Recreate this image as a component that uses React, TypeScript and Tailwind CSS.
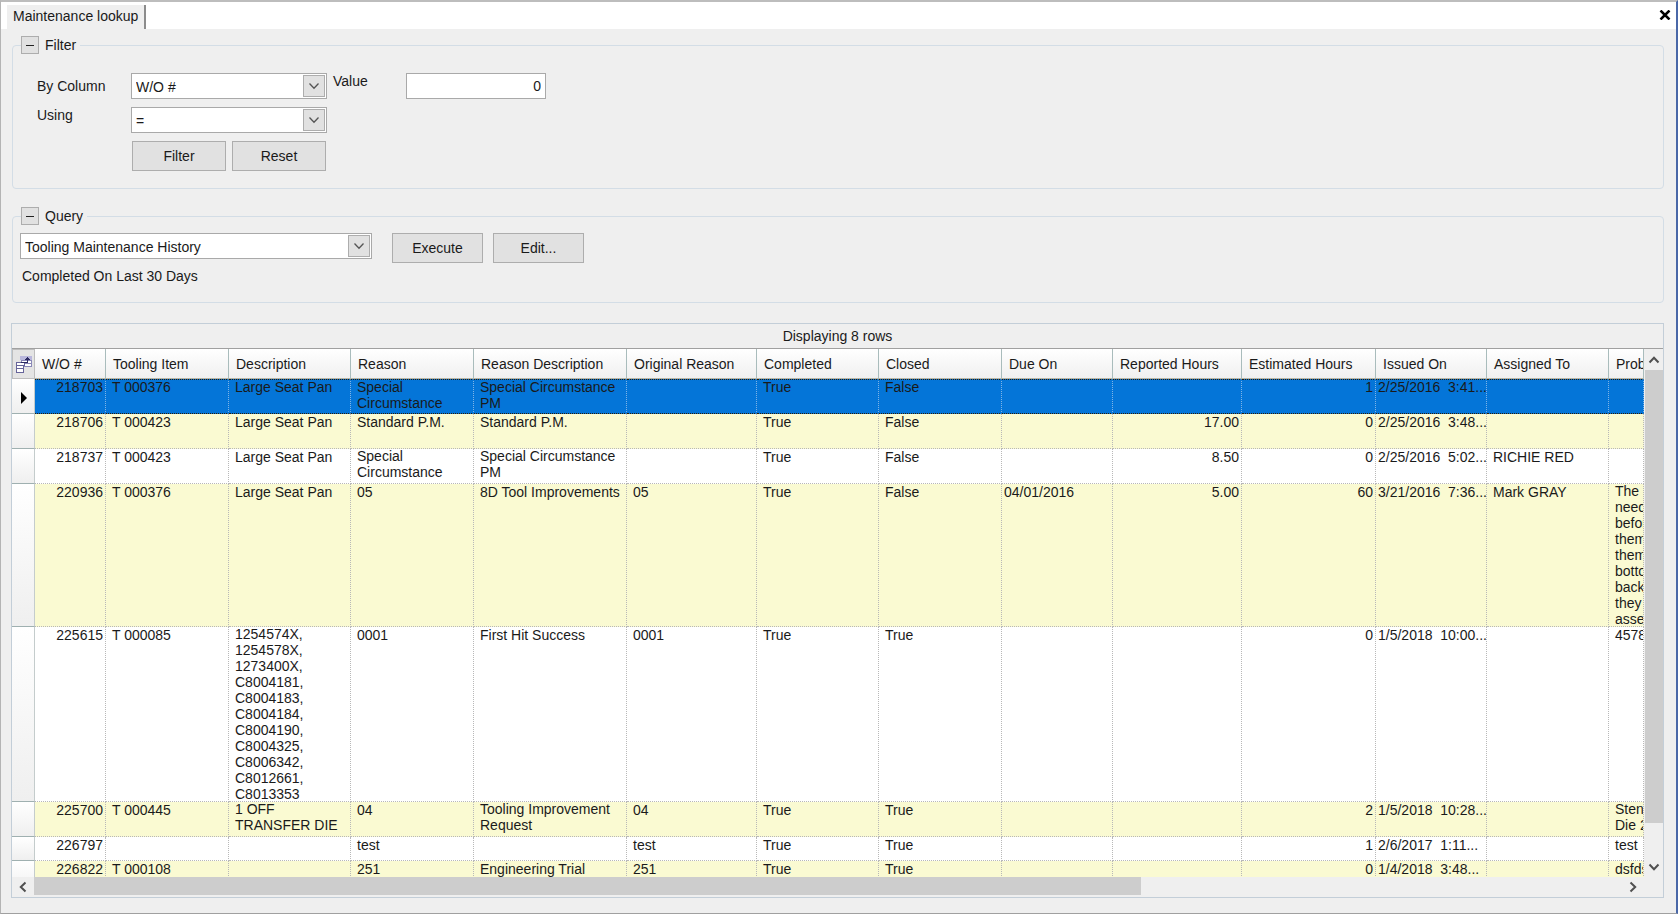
import { ReactNode } from "react";

type Cell = string | string[];

type Row = {
    height: string;
    cells: Cell[];
};

const columns = [
    { label: "W/O #", width: "w-[71px]", align: "pr-0.5 text-right" },
    { label: "Tooling Item", width: "w-[123px]", align: "pl-1.5" },
    { label: "Description", width: "w-[122px]", align: "pl-1.5" },
    { label: "Reason", width: "w-[123px]", align: "pl-1.5" },
    { label: "Reason Description", width: "w-[153px]", align: "pl-1.5" },
    { label: "Original Reason", width: "w-[130px]", align: "pl-1.5" },
    { label: "Completed", width: "w-[122px]", align: "pl-1.5" },
    { label: "Closed", width: "w-[123px]", align: "pl-1.5" },
    { label: "Due On", width: "w-[111px]", align: "pl-0.5" },
    { label: "Reported Hours", width: "w-[129px]", align: "pr-0.5 text-right" },
    { label: "Estimated Hours", width: "w-[134px]", align: "pr-0.5 text-right" },
    { label: "Issued On", width: "w-[111px]", align: "pl-0.5" },
    { label: "Assigned To", width: "w-[122px]", align: "pl-1.5" },
    { label: "Problem", width: "", align: "pl-1.5" },
];

const rows: Row[] = [
    {
        height: "h-[35px]",
        cells: ["218703", "T 000376", "Large Seat Pan", ["Special", "Circumstance"], ["Special Circumstance", "PM"], "", "True", "False", "", "", "1", "2/25/2016  3:41...", "", ""],
    },
    {
        height: "h-[35px]",
        cells: ["218706", "T 000423", "Large Seat Pan", "Standard P.M.", "Standard P.M.", "", "True", "False", "", "17.00", "0", "2/25/2016  3:48...", "", ""],
    },
    {
        height: "h-[35px]",
        cells: ["218737", "T 000423", "Large Seat Pan", ["Special", "Circumstance"], ["Special Circumstance", "PM"], "", "True", "False", "", "8.50", "0", "2/25/2016  5:02...", "RICHIE RED", ""],
    },
    {
        height: "h-[143px]",
        cells: ["220936", "T 000376", "Large Seat Pan", "05", "8D Tool Improvements", "05", "True", "False", "04/01/2016", "5.00", "60", "3/21/2016  7:36...", "Mark GRAY", ["The rails", "need", "before", "them", "them", "bottom", "back", "they", "assembly"]],
    },
    {
        height: "h-[175px]",
        cells: ["225615", "T 000085", ["1254574X,", "1254578X,", "1273400X,", "C8004181,", "C8004183,", "C8004184,", "C8004190,", "C8004325,", "C8006342,", "C8012661,", "C8013353"], "0001", "First Hit Success", "0001", "True", "True", "", "", "0", "1/5/2018  10:00...", "", "45789"],
    },
    {
        height: "h-[35px]",
        cells: ["225700", "T 000445", ["1 OFF", "TRANSFER DIE"], "04", ["Tooling Improvement", "Request"], "04", "True", "True", "", "", "2", "1/5/2018  10:28...", "", ["Stencil", "Die 2"]],
    },
    {
        height: "h-[24px]",
        cells: ["226797", "", "", "test", "", "test", "True", "True", "", "", "1", "2/6/2017  1:11...", "", "test"],
    },
    {
        height: "h-[35px]",
        cells: ["226822", "T 000108", "", "251", "Engineering Trial", "251", "True", "True", "", "", "0", "1/4/2018  3:48...", "", "dsfdsf"],
    },
];

function Chevron({ className }: { className: string }) {
    return (
        <svg viewBox="0 0 12 12" className={className} fill="none" stroke="currentColor">
            <path d="M1.5 3.5 6 8.2l4.5-4.7" />
        </svg>
    );
}

function Combo({ id, value, width, label }: { id: string; value: string; width: string; label?: string }) {
    return (
        <div className={`relative h-[26px] ${width}`}>
            <select
                id={id}
                aria-label={label}
                className="h-full w-full appearance-none border border-[#a9a9a9] bg-white pl-1 pr-7 pt-0.5 text-sm leading-5"
            >
                <option>{value}</option>
            </select>
            <span className="pointer-events-none absolute inset-y-[2px] right-[2px] flex w-[22px] items-center justify-center border border-[#adadad] bg-[#e1e1e1]">
                <Chevron className="size-3 stroke-[1.3] text-[#555]" />
            </span>
        </div>
    );
}

function PushButton({ children, width }: { children: ReactNode; width: string }) {
    return (
        <button type="button" className={`h-[30px] border border-[#adadad] bg-[#e1e1e1] text-center ${width}`}>
            {children}
        </button>
    );
}

function Group({ title, className, children }: { title: string; className: string; children: ReactNode }) {
    return (
        <fieldset className={`ml-[11px] mr-3 min-w-0 rounded-[4px] border border-[#d3dde6] ${className}`}>
            <legend className="ml-2 flex h-[18px] items-center gap-1.5 pr-1">
                <button
                    type="button"
                    aria-label={`Collapse ${title}`}
                    className="flex size-[18px] items-center justify-center border border-[#adadad] bg-[#e1e1e1]"
                >
                    <span className="h-px w-2 bg-[#222]" />
                </button>
                {title}
            </legend>
            {children}
        </fieldset>
    );
}

function FieldChooserIcon() {
    return (
        <svg viewBox="0 0 18 20" className="h-5 w-[18px]" shapeRendering="crispEdges">
            <path fill="#b9b7dc" d="M5 2h12v4H5z" />
            <path fill="#fff" stroke="#8a88b8" d="M6.5 6.5h10v3h-10zM6.5 9.5h10v3h-10z" />
            <path fill="#fff" stroke="#66649a" d="M1.5 8.5h8v3h-8zM1.5 11.5h7v3h-7zM1.5 14.5h7v4h-7z" />
            <path fill="none" stroke="#2d2b62" d="M6 8.5h6.5V3M10 5.5h5M11 4.5h3" />
        </svg>
    );
}

function GridCell({ value, align, selected }: { value: Cell; align: string; selected: boolean }) {
    const multiline = Array.isArray(value);
    const lines = Array.isArray(value) ? value : [value];
    return (
        <td
            className={`overflow-hidden border-r border-dotted p-0 align-top ${selected ? "border-r-[#7fb4e6]" : "border-r-[#b8b8b8]"} ${align}`}
        >
            <div className={multiline || selected ? "-my-px" : ""}>
                {lines.map((line, i) => (
                    <div key={i} className="h-4 whitespace-pre leading-4">
                        {line}
                    </div>
                ))}
            </div>
        </td>
    );
}

function Grid() {
    return (
        <table className="w-full table-fixed border-separate border-spacing-0">
            <thead>
                <tr className="h-[30px]">
                    <th className="w-[23px] border border-[#bdbdbd] bg-[#e4e4e4] p-0">
                        <span className="flex justify-center">
                            <FieldChooserIcon />
                        </span>
                    </th>
                    {columns.map((column) => (
                        <th
                            key={column.label}
                            className={`overflow-hidden whitespace-nowrap border-b border-r border-b-[#b5b5a8] border-r-[#a9bcbc] bg-linear-to-b from-white to-[#f0f0f0] py-0 pl-[7px] pr-0 text-left font-normal ${column.width}`}
                        >
                            {column.label}
                        </th>
                    ))}
                </tr>
            </thead>
            <tbody>
                {rows.map((row, i) => {
                    const selected = i === 0;
                    const fill = selected
                        ? "bg-[#0475d8] [&>td]:border-y [&>td]:border-y-[#2a1c08]"
                        : i % 2
                          ? "bg-[#fafad2] [&>td]:border-b [&>td]:border-b-[#b8b8b8]"
                          : "bg-white [&>td]:border-b [&>td]:border-b-[#b8b8b8]";
                    return (
                        <tr key={row.cells[0] as string} className={`${row.height} ${fill}`}>
                            <th
                                scope="row"
                                className="border-b border-r border-b-[#9fb0b0] border-r-[#c4cccc] bg-linear-to-b from-white to-[#efefef] p-0"
                            >
                                {selected && (
                                    <svg viewBox="0 0 6 12" className="ml-[9px] mt-1 h-3 w-1.5">
                                        <path d="M0 0v12l6-6z" />
                                    </svg>
                                )}
                            </th>
                            {row.cells.map((value, c) => (
                                <GridCell key={c} value={value} align={columns[c].align} selected={selected} />
                            ))}
                        </tr>
                    );
                })}
            </tbody>
        </table>
    );
}

function App() {
    return (
        <div className="flex h-screen flex-col overflow-hidden border-b border-l border-r-2 border-t-2 border-b-[#a0a0a0] border-l-[#b4b4b4] border-r-[#4a68a8] border-t-[#bdbdbd] bg-[#efefef] font-['Liberation_Sans',Arial,sans-serif] text-sm leading-4 text-[#1a1a1a]">
            <header className="flex h-[27px] shrink-0 items-end justify-between bg-white pl-1.5">
                <div className="flex h-6 items-center border-r-2 border-[#8c8c8c] bg-[#efefef] pb-0.5 pl-1.5 pr-1.5">
                    Maintenance lookup
                </div>
                <button type="button" aria-label="Close" className="mr-[5px] flex h-full items-center pb-0.5">
                    <svg viewBox="0 0 12 10" className="h-2.5 w-3" fill="none" stroke="#000" strokeWidth="2.5">
                        <path d="M1.5.5l9 9M10.5.5l-9 9" />
                    </svg>
                </button>
            </header>

            <Group title="Filter" className="mt-[7px] h-[153px]">
                <div className="ml-6 mt-[19px] grid grid-cols-[94px_196px_79px_140px] gap-y-2">
                    <label htmlFor="column" className="pt-[5px]">
                        By Column
                    </label>
                    <Combo id="column" value="W/O #" width="w-[196px]" />
                    <label htmlFor="value" className="pl-1.5">
                        Value
                    </label>
                    <input
                        id="value"
                        defaultValue="0"
                        className="h-[26px] w-[140px] border border-[#a9a9a9] bg-white px-1 text-right"
                    />
                    <label htmlFor="operator">Using</label>
                    <Combo id="operator" value="=" width="w-[196px]" />
                </div>
                <div className="ml-[119px] mt-2 flex gap-1.5">
                    <PushButton width="w-[94px]">Filter</PushButton>
                    <PushButton width="w-[94px]">Reset</PushButton>
                </div>
            </Group>

            <Group title="Query" className="mt-[18px] h-[96px]">
                <div className="ml-[7px] mt-2 flex">
                    <Combo id="query" label="Query" value="Tooling Maintenance History" width="w-[352px]" />
                    <div className="ml-5 flex gap-2.5">
                        <PushButton width="w-[91px]">Execute</PushButton>
                        <PushButton width="w-[91px]">Edit...</PushButton>
                    </div>
                </div>
                <p className="ml-[9px] mt-[5px]">Completed On Last 30 Days</p>
            </Group>

            <main className="mb-[15px] ml-2.5 mr-3 mt-5 flex min-h-0 flex-1 flex-col border border-[#c3ced8]">
                <div className="flex h-[25px] shrink-0 items-center justify-center border-b border-[#a0a0a0]">
                    Displaying 8 rows
                </div>
                <div className="flex min-h-0 flex-1">
                    <div className="min-w-0 flex-1 overflow-hidden bg-white">
                        <Grid />
                    </div>
                    <div className="flex w-[19px] shrink-0 flex-col items-center">
                        <button type="button" aria-label="Scroll up" className="flex h-[21px] items-center">
                            <Chevron className="size-3 rotate-180 stroke-2 text-[#505050]" />
                        </button>
                        <div className="w-[18px] grow-[453] bg-[#cdcdcd]" />
                        <div className="grow-[33]" />
                        <button type="button" aria-label="Scroll down" className="flex h-[21px] items-center">
                            <Chevron className="size-3 stroke-2 text-[#505050]" />
                        </button>
                    </div>
                </div>
                <div className="flex h-5 shrink-0 items-start pr-[19px]">
                    <button type="button" aria-label="Scroll left" className="flex h-[19px] w-[22px] items-center justify-center">
                        <Chevron className="size-3 rotate-90 stroke-2 text-[#505050]" />
                    </button>
                    <div className="h-[18px] grow-[1107] bg-[#cdcdcd]" />
                    <div className="grow-[481]" />
                    <button type="button" aria-label="Scroll right" className="flex h-[19px] w-[22px] items-center justify-center">
                        <Chevron className="size-3 -rotate-90 stroke-2 text-[#505050]" />
                    </button>
                </div>
            </main>
        </div>
    );
}

export default App;
